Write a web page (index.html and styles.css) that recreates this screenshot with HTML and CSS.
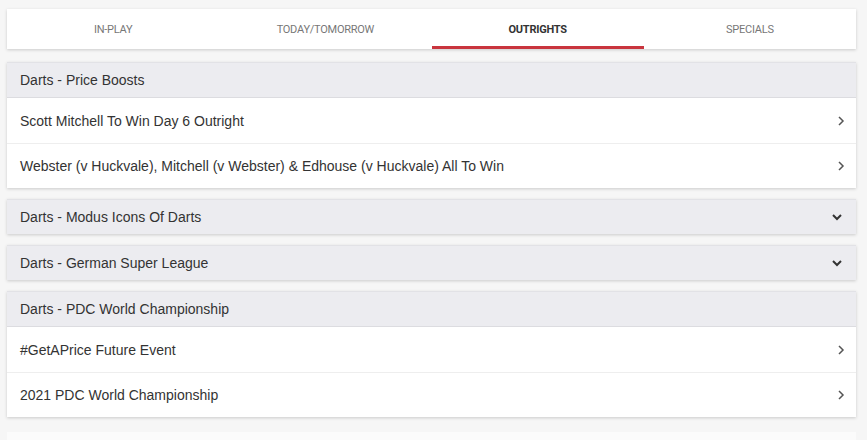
FILE: index.html
```html
<!DOCTYPE html>
<html lang="en">
<head>
    <meta charset="UTF-8">
    <title>Darts - Outrights</title>
    <link rel="stylesheet" href="styles.css">
</head>
<body>

<div class="page">
    <ul class="tabs">
        <li>In-Play</li>
        <li>Today/Tomorrow</li>
        <li class="active">Outrights</li>
        <li>Specials</li>
    </ul>

    <div class="group">
        <div class="group-head">Darts - Price Boosts</div>
        <a class="row" href="#">Scott Mitchell To Win Day 6 Outright
            <svg class="arrow" viewBox="0 0 8 12"><path d="M2 2l4 4-4 4"/></svg></a>
        <a class="row" href="#">Webster (v Huckvale), Mitchell (v Webster) &amp; Edhouse (v Huckvale) All To Win
            <svg class="arrow" viewBox="0 0 8 12"><path d="M2 2l4 4-4 4"/></svg></a>
    </div>

    <div class="group">
        <div class="group-head">Darts - Modus Icons Of Darts
            <svg class="caret" viewBox="0 0 12 8"><path d="M2 2l4 4 4-4"/></svg></div>
    </div>

    <div class="group">
        <div class="group-head">Darts - German Super League
            <svg class="caret" viewBox="0 0 12 8"><path d="M2 2l4 4 4-4"/></svg></div>
    </div>

    <div class="group">
        <div class="group-head">Darts - PDC World Championship</div>
        <a class="row" href="#">#GetAPrice Future Event
            <svg class="arrow" viewBox="0 0 8 12"><path d="M2 2l4 4-4 4"/></svg></a>
        <a class="row" href="#">2021 PDC World Championship
            <svg class="arrow" viewBox="0 0 8 12"><path d="M2 2l4 4-4 4"/></svg></a>
    </div>

    <div class="more"></div>
</div>

</body>
</html>
```

FILE: styles.css
```css
/* reset */
*{margin: 0;padding: 0;list-style: none;box-sizing: border-box;}
body{background: #f6f6f6;font-family: Arial, "Liberation Sans", sans-serif;color: #333;overflow: hidden;}
.page{padding: 9px 11px 0 7px;}

/* tabs */
.tabs{display: flex;height: 40px;background: #fff;box-shadow: 0 1px 3px rgba(0,0,0,.18);}
.tabs li{flex: 1;display: flex;align-items: center;justify-content: center;font-family: Roboto, sans-serif;font-size: 11px;text-transform: uppercase;color: #777;letter-spacing: -.25px;border-bottom: 3px solid transparent;padding-top: 3px;}
.tabs li.active{color: #333;font-weight: bold;border-bottom-color: #c9353e;}

/* groups */
.group{margin-top: 11px;background: #fff;box-shadow: 0 1px 3px rgba(0,0,0,.18);}
.group:first-of-type{margin-top: 13px;}
.group-head{display: flex;align-items: center;justify-content: space-between;height: 35px;padding: 0 13px 0 13px;background: #ececf0;border-top: 1px solid #e2e2e6;font-size: 14px;color: #333;}
.row{display: flex;align-items: center;justify-content: space-between;height: 45px;padding: 0 11px 0 13px;border-top: 1px solid #eeeeee;font-size: 14px;color: #333;text-decoration: none;}
.group-head + .row{height: 46px;padding-top: 1px;border-top-color: #dcdce0;}

.arrow{width: 8px;height: 12px;fill: none;stroke: #555;stroke-width: 1.5;}
.caret{width: 12px;height: 8px;fill: none;stroke: #333;stroke-width: 2;}

.more{margin-top: 15px;height: 20px;background: #fbfbfb;}
```
